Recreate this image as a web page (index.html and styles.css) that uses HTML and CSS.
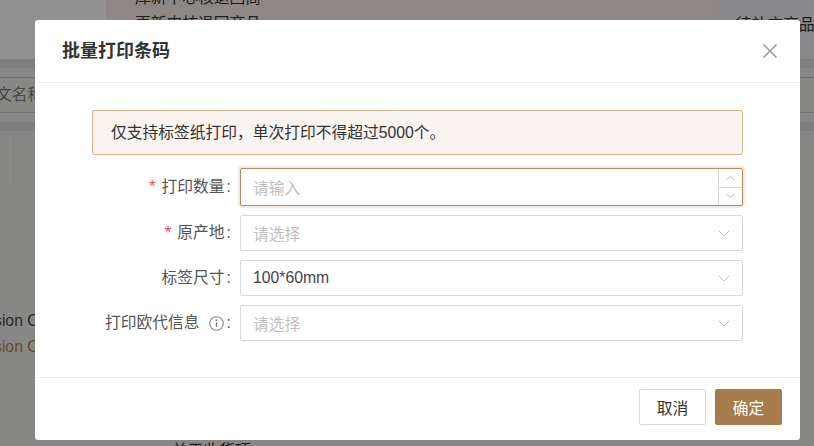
FILE: index.html
```html
<!DOCTYPE html>
<html lang="zh-CN">
<head>
<meta charset="utf-8">
<title>批量打印条码</title>
<link rel="stylesheet" href="styles.css">
</head>
<body>
<div class="page" aria-hidden="true">
  <div class="side"></div>
  <div class="center"></div>
  <div class="right"></div>
  <div class="strip strip-a"></div>
  <div class="strip strip-b"></div>
  <div class="search"><span>文名称</span></div>
  <div class="cell"></div>
  <span class="bg-text t1">库新中心核退回商</span>
  <span class="bg-text t2">更新中核退回商品</span>
  <span class="bg-text t3">待补充商品负</span>
  <span class="bg-text t4">sion C</span>
  <span class="bg-text t5">sion C</span>
  <span class="bg-text t6">关于收货项</span>
</div>
<div class="overlay"></div>
<section class="modal">
  <header class="modal-head">
    <h2>批量打印条码</h2>
    <svg class="close" viewBox="0 0 16 16" width="16" height="16"><path d="M1.5 1.5l13 13M14.5 1.5l-13 13" stroke="#999" stroke-width="1.5" fill="none"/></svg>
  </header>
  <div class="modal-body">
    <div class="alert">仅支持标签纸打印，单次打印不得超过5000个。</div>
    <form class="form">
      <div class="row">
        <label class="label"><i class="req">*</i>打印数量<span class="colon">:</span></label>
        <div class="input focus">
          <span class="ph">请输入</span>
          <div class="stepper">
            <span class="step"><svg viewBox="0 0 10 6" width="9" height="6"><path d="M1 5l4-4 4 4" stroke="#aaa" fill="none"/></svg></span>
            <span class="step"><svg viewBox="0 0 10 6" width="9" height="6"><path d="M1 1l4 4 4-4" stroke="#aaa" fill="none"/></svg></span>
          </div>
        </div>
      </div>
      <div class="row">
        <label class="label"><i class="req">*</i>原产地<span class="colon">:</span></label>
        <div class="input"><span class="ph">请选择</span><svg class="caret" viewBox="0 0 12 7" width="12" height="7"><path d="M.7.7L6 6.2 11.3.7" stroke="#bbb" fill="none"/></svg></div>
      </div>
      <div class="row">
        <label class="label">标签尺寸<span class="colon">:</span></label>
        <div class="input"><span class="val">100*60mm</span><svg class="caret" viewBox="0 0 12 7" width="12" height="7"><path d="M.7.7L6 6.2 11.3.7" stroke="#bbb" fill="none"/></svg></div>
      </div>
      <div class="row">
        <label class="label">打印欧代信息<svg class="info" viewBox="0 0 15 15" width="15" height="15"><circle cx="7.5" cy="7.5" r="6.8" stroke="#888" stroke-width="1.1" fill="none"/><path d="M7.5 6.3v4.8" stroke="#777" stroke-width="1.3"/><circle cx="7.5" cy="4.2" r=".9" fill="#777"/></svg><span class="colon info-colon">:</span></label>
        <div class="input"><span class="ph">请选择</span><svg class="caret" viewBox="0 0 12 7" width="12" height="7"><path d="M.7.7L6 6.2 11.3.7" stroke="#bbb" fill="none"/></svg></div>
      </div>
    </form>
  </div>
  <footer class="modal-foot">
    <button class="btn" type="button">取消</button>
    <button class="btn primary" type="button">确定</button>
  </footer>
</section>
</body>
</html>
```
FILE: styles.css
```css
* { box-sizing: border-box; }
html, body { margin: 0; height: 100%; overflow: hidden; }
body {
  position: relative;
  width: 814px;
  height: 446px;
  background: #fff;
  font-family: "Liberation Sans", "Noto Sans CJK SC", sans-serif;
  font-size: 15.75px;
  color: #333;
}
/* Page lying behind the dialog */
.page { position: absolute; inset: 0; overflow: hidden; background: #e2e2e0; }
.side { position: absolute; left: 0; top: 0; width: 106px; height: 60px; background: #f3f3f3; }
.center { position: absolute; left: 106px; top: 0; width: 611px; height: 60px; background: #ebe3de; }
.right { position: absolute; left: 717px; top: 0; right: 0; height: 60px; background: #e3e3e8; }
.strip { position: absolute; left: 0; right: 0; background: #d2d2d2; }
.strip-a { top: 59px; height: 9px; }
.strip-b { top: 122px; height: 9px; }
.search { position: absolute; left: -4px; right: 0; top: 77px; height: 36px; border-top: 1px solid #bbb; border-bottom: 1px solid #bbb; color: #777; line-height: 34px; }
.cell { position: absolute; left: 0; top: 131px; width: 14px; height: 52px; border-right: 1px solid #d5d5d5; }
.bg-text { position: absolute; white-space: nowrap; line-height: 20px; color: #333; }
.t1 { left: 135px; top: -12px; }
.t2 { left: 135px; top: 14px; }
.t3 { left: 736px; top: 15px; }
.t4 { left: -6px; top: 311px; color: #444; }
.t5 { left: -6px; top: 337px; color: #a87d4c; }
.t6 { left: 172px; top: 441px; }
.overlay { position: absolute; inset: 0; background: rgba(0, 0, 0, .4); }

.modal {
  position: absolute;
  left: 35px;
  top: 20px;
  width: 765px;
  height: 420px;
  display: flex;
  flex-direction: column;
  background: #fff;
  border-radius: 3px;
}
.modal-head {
  height: 63px;
  flex: none;
  display: flex;
  align-items: center;
  justify-content: space-between;
  padding: 0 22px 0 27px;
  border-bottom: 1px solid #eee;
}
.modal-head h2 { margin: 0; font-size: 18px; font-weight: 700; color: #333; line-height: 24px; }
.modal-body { flex: 1; padding: 27px 57px 0; border-bottom: 1px solid #eee; }
.alert {
  height: 45px;
  padding-left: 18px;
  line-height: 43px;
  background: #f9f4f0;
  border: 1px solid #d5b48c;
  border-radius: 2px;
  color: #333;
}
.form { display: flex; flex-direction: column; gap: 9px; margin-top: 13px; }
.row { display: flex; align-items: center; gap: 8px; }
.label { width: 139px; flex: none; margin-right: 1px; display: flex; align-items: center; justify-content: flex-end; color: #555; line-height: 20px; white-space: nowrap; }
.colon { margin-left: 2px; }
.info-colon { margin-left: 3px; }
.req { font-style: normal; color: #f5484a; margin-right: 6px; font-size: 17px; }
.info { margin-left: 9px; }
.input {
  position: relative;
  flex: 1;
  height: 36px;
  display: flex;
  align-items: center;
  justify-content: space-between;
  padding: 0 12px 0 12px;
  border: 1px solid #d9d9d9;
  border-radius: 2px;
  background: #fff;
}
.input.focus {
  height: 38px;
  padding-right: 0;
  border-color: #b58d5e;
  box-shadow: 0 0 0 2px rgba(168, 125, 76, .16);
}
.ph { color: #bfbfbf; }
.val { color: #444; }
.stepper { position: absolute; right: 0; top: 0; bottom: 0; width: 24px; display: flex; flex-direction: column; border-left: 1px solid #d9d9d9; }
.step { flex: 1; display: flex; align-items: center; justify-content: center; }
.step + .step { border-top: 1px solid #d9d9d9; }
.modal-foot { height: 62px; flex: none; display: flex; justify-content: flex-end; align-items: flex-start; gap: 9px; padding: 11px 18px 0 0; }
.btn {
  width: 67px;
  height: 36px;
  padding: 0;
  font: inherit;
  color: #333;
  background: #fff;
  border: 1px solid #d9d9d9;
  border-radius: 2px;
}
.btn.primary { background: #a67c4a; border-color: #a67c4a; color: #fff; }
```
